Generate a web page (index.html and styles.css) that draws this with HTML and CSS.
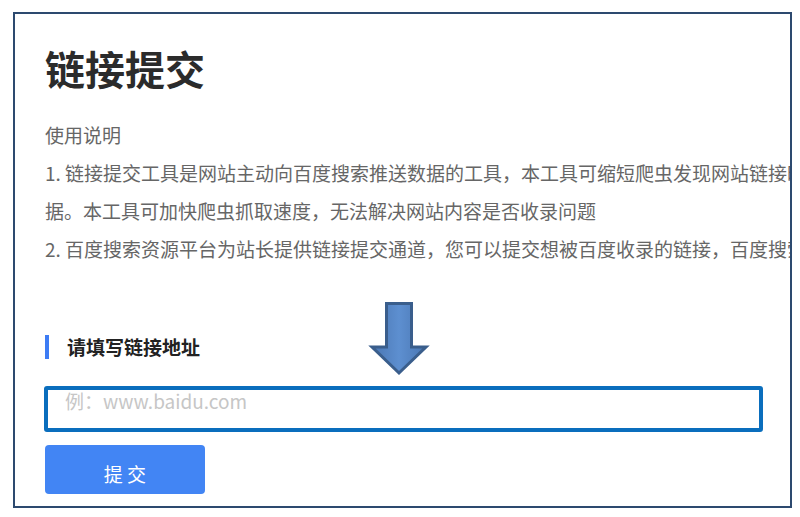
FILE: index.html
```html
<!DOCTYPE html>
<html>
<head>
    <meta charset="utf-8">
    <title>链接提交</title>
    <link rel="stylesheet" href="styles.css">
</head>
<body>
    <div class="frame">
        <h1 class="title">链接提交</h1>

        <div class="intro">
            <div class="line">使用说明</div>
            <div class="line">1. 链接提交工具是网站主动向百度搜索推送数据的工具，本工具可缩短爬虫发现网站链接时间，网站时效性内容建议使用链接提交工具，实时向搜索推送数</div>
            <div class="line">据。本工具可加快爬虫抓取速度，无法解决网站内容是否收录问题</div>
            <div class="line">2. 百度搜索资源平台为站长提供链接提交通道，您可以提交想被百度收录的链接，百度搜索引擎会按照标准处理，但不保证一定能够收录您提交的链接。</div>
        </div>

        <div class="field-label">请填写链接地址</div>
        <input class="url-input" type="text" placeholder="例：www.baidu.com">
        <button class="submit-btn">提 交</button>

        <!-- annotation arrow -->
        <svg class="arrow" width="66" height="80" viewBox="0 0 66 80">
            <defs>
                <linearGradient id="arrowFill" x1="0" y1="0" x2="1" y2="0">
                    <stop offset="0" stop-color="#4a76b2"/>
                    <stop offset="0.5" stop-color="#5d8fd0"/>
                    <stop offset="1" stop-color="#4a76b2"/>
                </linearGradient>
            </defs>
            <polygon points="18.5,4.5 43.5,4.5 43.5,48 58,48 31,74 4,48 18.5,48"
                     fill="url(#arrowFill)" stroke="#3a5e8c" stroke-width="3" stroke-linejoin="miter"/>
        </svg>
    </div>
</body>
</html>
```

FILE: styles.css
```css
body {
    margin: 0;
    background-color: #ffffff;
    font-family: "Noto Sans CJK SC", "Microsoft YaHei", sans-serif;
}
.frame {
    position: relative;
    box-sizing: border-box;
    width: 779px;
    height: 496px;
    margin: 12px 0 0 13px;
    padding: 30px 0 0 30px;
    border: 2px solid #2d4a6f;
    overflow: hidden;
    background-color: #ffffff;
}
.title {
    margin: 0;
    font-size: 40px;
    line-height: 48px;
    font-weight: bold;
    color: #2b2b2b;
}
.intro {
    margin-top: 24px;
    font-size: 19px;
    line-height: 38px;
    color: #666666;
}
.intro .line {
    white-space: nowrap;
}
.field-label {
    margin-top: 67px;
    height: 24px;
    line-height: 24px;
    padding-left: 18px;
    border-left: 4px solid #3d7cf4;
    font-size: 19px;
    font-weight: bold;
    color: #222222;
}
.url-input {
    display: block;
    box-sizing: border-box;
    width: 719px;
    height: 46px;
    margin: 27px 0 0 -1px;
    padding: 1px 16px 18px 17px;
    border: 4px solid #0a6ebd;
    border-radius: 3px;
    font-family: inherit;
    font-size: 19px;
    color: #333333;
    outline: none;
}
.url-input::placeholder {
    color: #c6c6c6;
}
.submit-btn {
    display: block;
    box-sizing: border-box;
    width: 160px;
    height: 49px;
    margin-top: 13px;
    padding: 8px 0 0 0;
    border: none;
    border-radius: 4px;
    background-color: #4285f4;
    color: #ffffff;
    font-family: inherit;
    font-size: 19px;
    line-height: 41px;
    cursor: pointer;
}
.arrow {
    position: absolute;
    left: 353px;
    top: 285px;
}
```
